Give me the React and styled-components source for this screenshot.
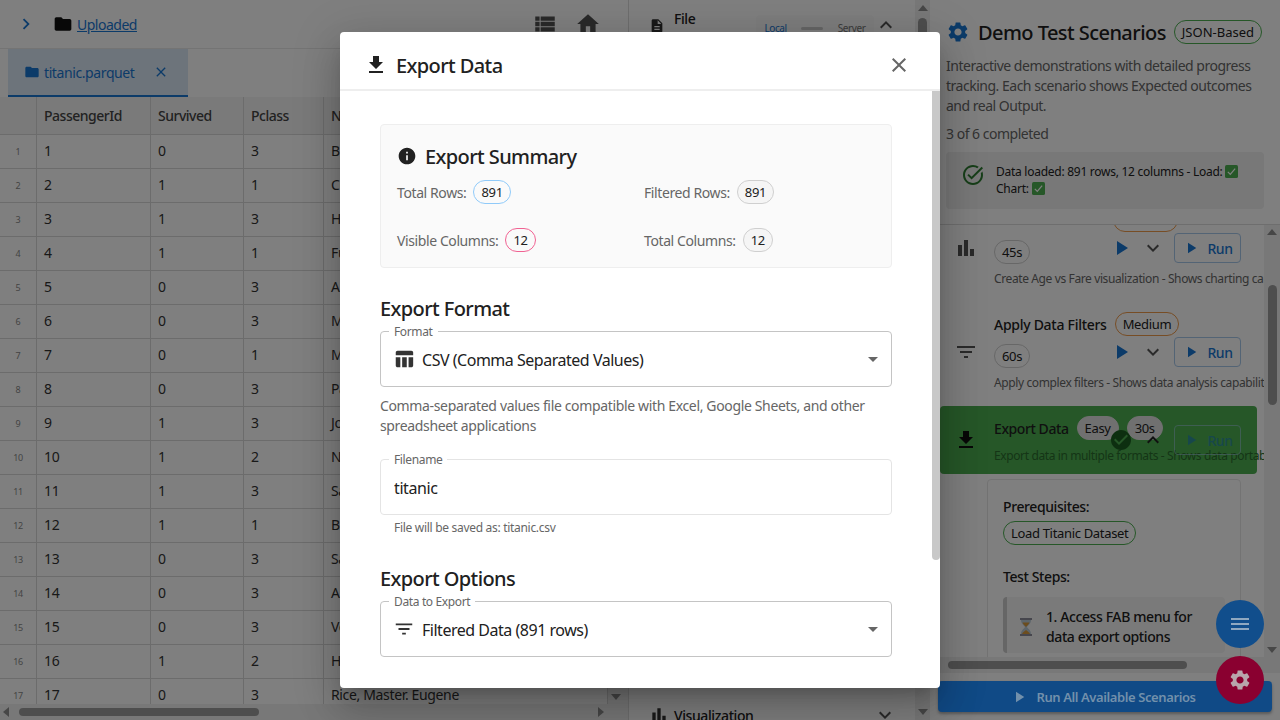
import React from "react"
import styled, { createGlobalStyle } from "styled-components"
import {
  MdBarChart, MdCheckCircle, MdChevronRight, MdClose, MdDescription, MdExpandLess, MdExpandMore,
  MdFileDownload, MdFilterList, MdFolder, MdHome, MdInfo, MdMenu, MdPlayArrow, MdSettings,
  MdTableChart, MdTaskAlt, MdViewList, MdArrowDropDown,
} from "react-icons/md"

const rows = [
  [1, 0, 3, "Braund, Mr. Owen Harris"],
  [2, 1, 1, "Cumings, Mrs. John Bradley"],
  [3, 1, 3, "Heikkinen, Miss. Laina"],
  [4, 1, 1, "Futrelle, Mrs. Jacques Heath"],
  [5, 0, 3, "Allen, Mr. William Henry"],
  [6, 0, 3, "Moran, Mr. James"],
  [7, 0, 1, "McCarthy, Mr. Timothy J"],
  [8, 0, 3, "Palsson, Master. Gosta Leonard"],
  [9, 1, 3, "Johnson, Mrs. Oscar W"],
  [10, 1, 2, "Nasser, Mrs. Nicholas"],
  [11, 1, 3, "Sandstrom, Miss. Marguerite Rut"],
  [12, 1, 1, "Bonnell, Miss. Elizabeth"],
  [13, 0, 3, "Saundercock, Mr. William Henry"],
  [14, 0, 3, "Andersson, Mr. Anders Johan"],
  [15, 0, 3, "Vestrom, Miss. Hulda Amanda"],
  [16, 1, 2, "Hewlett, Mrs. Mary D Kingcome"],
  [17, 0, 3, "Rice, Master. Eugene"],
]

const GlobalStyle = createGlobalStyle`
  body {
    margin: 0;
    overflow: hidden;
    font-family: "Noto Sans", "Open Sans", sans-serif;
    letter-spacing: -0.025em;
    color: #212121;
  }
  * { box-sizing: border-box; }
`

const Page = styled.div`
  position: relative;
  width: 1280px;
  height: 720px;
  display: flex;
  overflow: hidden;
  background: #fff;
`

/* left side: file tree + table */
const LeftPanel = styled.section`
  width: 629px;
  height: 720px;
  flex: none;
  display: flex;
  flex-direction: column;
  border-right: 1px solid #ddd;
`
const PathBar = styled.div`
  height: 49px;
  flex: none;
  display: flex;
  align-items: center;
  padding: 0 27px 0 15px;
  border-bottom: 1px solid #e8e8e8;
  color: #555;
  font-size: 14px;
`
const PathSpacer = styled.div`flex: 1;`
const ChevronBlue = styled(MdChevronRight)`
  color: #1976d2;
  margin-right: 16px;
`
const BlackFolder = styled(MdFolder)`
  color: #111;
  margin-right: 4px;
`
const PathLink = styled.a`
  color: #1976d2;
  text-decoration: underline;
  letter-spacing: -0.035em;
  margin-top: 1px;
`
const BarIcon = styled.span`
  display: flex;
  margin-left: ${p => p.$gap || 0}px;
  color: #555;
`
const TabStrip = styled.div`
  height: 48px;
  flex: none;
  padding-left: 8px;
  display: flex;
`
const Tab = styled.div`
  width: 180px;
  height: 48px;
  display: flex;
  align-items: center;
  padding-left: 16px;
  gap: 4px;
  background: #dbe9f6;
  border-bottom: 2px solid #1976d2;
  color: #1976d2;
  font-size: 14px;
`
const TabClose = styled(MdClose)`
  margin-left: 14px;
`
const TableFrame = styled.div`
  flex: 1;
  min-height: 0;
  display: flex;
`
const TableColumn = styled.div`
  width: 608px;
  flex: none;
  display: flex;
  flex-direction: column;
`
const TableArea = styled.div`
  flex: 1;
  min-height: 0;
  overflow: hidden;
`
const Row = styled.div`
  display: grid;
  grid-template-columns: 37px 114px 93px 80px 1fr;
  height: ${p => (p.$head ? 38 : 34)}px;
  background: ${p => (p.$head ? "#f5f5f5" : "#fff")};
  border-bottom: 1px solid #d8d8d8;
  font-size: 14px;
  font-weight: ${p => (p.$head ? 500 : 400)};
  letter-spacing: ${p => (p.$head ? "-0.035em" : "-0.025em")};
  color: ${p => (p.$head ? "#444" : "#333")};
`
const Cell = styled.div`
  display: flex;
  align-items: center;
  padding: 0 0 ${p => (p.$head ? 0 : 2)}px 7px;
  border-right: 1px solid #d8d8d8;
  white-space: nowrap;
  overflow: hidden;
`
const IndexCell = styled(Cell)`
  justify-content: center;
  padding: 0;
  font-size: 9px;
  color: #888;
`
const HScroll = styled.div`
  height: 16px;
  flex: none;
  display: flex;
  align-items: center;
  padding: 0 ${p => p.$right || 0}px 0 ${p => p.$left || 0}px;
  background: #f1f1f1;
`
const ScrollThumb = styled.div`
  width: ${p => p.$w}px;
  height: 8px;
  margin: 0 ${p => p.$after || 0}px 0 ${p => p.$before || 0}px;
  border-radius: 4px;
  background: #9c9c9c;
`
const TableVScroll = styled.div`
  flex: 1;
  display: flex;
  flex-direction: column;
  align-items: center;
  justify-content: flex-end;
  padding: 0 4px 20px 0;
  background: #f1f1f1;
`
const Arrow = styled.span`
  flex: none;
  width: 0;
  height: 0;
  border: 5px solid transparent;
  ${p => p.$dir === "left" && "border-right: 6px solid #8f8f8f; border-left: 0;"}
  ${p => p.$dir === "right" && "border-left: 6px solid #8f8f8f; border-right: 0;"}
  ${p => p.$dir === "up" && "border-bottom: 6px solid #8f8f8f; border-top: 0;"}
  ${p => p.$dir === "down" && "border-top: 6px solid #8f8f8f; border-bottom: 0;"}
`

/* middle column, mostly under the dialog */
const MiddlePanel = styled.section`
  width: 286px;
  height: 720px;
  flex: none;
  display: flex;
  flex-direction: column;
  justify-content: space-between;
  overflow: hidden;
`
const Accordion = styled.div`
  display: flex;
  align-items: ${p => (p.$top ? "flex-start" : "center")};
  height: ${p => (p.$top ? 60 : 36)}px;
  margin-bottom: ${p => (p.$top ? 0 : -12)}px;
  padding-left: 20px;
  padding-top: ${p => (p.$top ? 9 : 2)}px;
  font-size: 14px;
  font-weight: 500;
`
const AccordionIcon = styled.span`
  display: flex;
  width: 25px;
  margin-top: ${p => p.$top || 0}px;
  color: #333;
`
const ModeBox = styled.div`
  width: 118px;
  height: 34px;
  margin: 6px 0 0 61px;
  display: flex;
  align-items: flex-start;
  justify-content: space-between;
  padding: 6px 9px 0 8px;
  background: #fafafa;
  border-radius: 4px;
  font-size: 10px;
  line-height: 14px;
  font-weight: 400;
  color: #777;
`
const ModeLabel = styled.span`
  color: ${p => (p.$on ? "#1976d2" : "#777")};
`
const Switch = styled.span`
  width: 22px;
  height: 3px;
  margin-top: 6px;
  background: #ccc;
  border-radius: 2px;
`
const AccordionEnd = styled.span`
  display: flex;
  margin-left: ${p => p.$gap}px;
  margin-top: ${p => p.$top || 0}px;
  color: #555;
`
const MiddleScroll = styled.div`
  width: 15px;
  height: 720px;
  flex: none;
  display: flex;
  flex-direction: column;
  align-items: center;
  padding: 5px 0;
  background: #f1f1f1;
`
const MiddleThumb = styled.div`
  width: 9px;
  height: 300px;
  margin: 7px 0 auto;
  border-radius: 5px;
  background: #9c9c9c;
`
const Gutter = styled.div`
  width: 8px;
  flex: none;
`

/* right side: test scenarios */
const ScenarioPanel = styled.section`
  flex: 1;
  min-width: 0;
  display: flex;
  flex-direction: column;
  height: 720px;
`
const ScenarioHead = styled.div`
  height: 225px;
  flex: none;
  padding: 20px 16px 0 8px;
  border-bottom: 1px solid #ddd;
`
const TitleRow = styled.div`
  display: flex;
  align-items: center;
  height: 24px;
  gap: 8px;
  font-size: 20px;
  font-weight: 500;
  letter-spacing: -0.028em;
  white-space: nowrap;
`
const BlueGear = styled(MdSettings)`
  color: #1976d2;
  flex: none;
`
const Muted = styled.div`
  font-size: 14px;
  line-height: 20px;
  letter-spacing: -0.035em;
  color: #666;
  margin-top: ${p => p.$top}px;
`
const Notice = styled.div`
  display: flex;
  align-items: flex-start;
  margin-top: 8px;
  height: 57px;
  padding: 11px 16px 0 15px;
  background: #f0f0f0;
  border-radius: 4px;
  font-size: 12px;
  line-height: 17px;
  letter-spacing: -0.022em;
  gap: 11px;
`
const NoticeIcon = styled(MdTaskAlt)`
  color: #2e7d32;
  flex: none;
`
const Tick = styled.svg`
  width: 13px;
  height: 13px;
  vertical-align: -2px;
`
const ListFrame = styled.div`
  height: 432px;
  flex: none;
  display: flex;
`
const ScenarioList = styled.div`
  width: 326px;
  flex: none;
  overflow: hidden;
  padding-left: 2px;
`
const Scenario = styled.div`
  position: relative;
  width: 317px;
  height: ${p => (p.$done ? 68 : 104)}px;
  margin-top: ${p => p.$shift || 0}px;
  display: flex;
  align-items: center;
  padding-left: 14px;
  border-radius: 4px;
  background: ${p => (p.$done ? "#4caf50" : "transparent")};
`
const ScenarioIcon = styled.span`
  display: flex;
  width: 40px;
  flex: none;
  color: ${p => (p.$done ? "#111" : "#555")};
`
const ScenarioText = styled.div`
  align-self: flex-start;
  margin-top: ${p => (p.$done ? 10 : 12)}px;
  display: flex;
  flex-direction: column;
  min-width: 0;
  white-space: nowrap;
`
const ScenarioLine = styled.div`
  display: flex;
  align-items: center;
  height: 24px;
  gap: 8px;
  padding-left: ${p => p.$indent || 0}px;
  margin-bottom: ${p => p.$after || 0}px;
  font-size: 14px;
  font-weight: 500;
  letter-spacing: ${p => (p.$tight ? "-0.03em" : "-0.02em")};
`
const ScenarioDesc = styled.div`
  font-size: 12px;
  line-height: 20px;
  letter-spacing: -0.032em;
  color: ${p => (p.$done ? "#2a6b2d" : "#666")};
`
const Chip = styled.span`
  display: inline-flex;
  align-items: center;
  height: 24px;
  padding: 0 7px;
  border-radius: 12px;
  border: 1px solid ${p => p.$line || "#cfcfcf"};
  background: ${p => p.$fill || "transparent"};
  font-size: 13px;
  font-weight: 400;
  letter-spacing: ${p => (p.$wide ? "0" : "-0.025em")};
  color: #212121;
  white-space: nowrap;
  flex: none;
`
const Actions = styled.div`
  position: absolute;
  right: 16px;
  top: 50%;
  transform: translateY(-50%);
  display: flex;
  align-items: center;
`
const ActionIcon = styled.span`
  width: 32px;
  display: flex;
  justify-content: center;
  color: ${p => p.$c};
`
const RunButton = styled.span`
  width: 67px;
  height: 30px;
  margin-left: 5px;
  display: flex;
  align-items: center;
  justify-content: center;
  gap: 7px;
  border: 1px solid #a6c8ea;
  border-radius: 4px;
  color: #1976d2;
  font-size: 14px;
  font-weight: 500;
  opacity: ${p => (p.$off ? 0.55 : 1)};
`
const Details = styled.div`
  width: 254px;
  height: 300px;
  margin: 5px 0 0 47px;
  padding: 17px 0 0 15px;
  border: 1px solid #e6e6e6;
  border-radius: 4px;
`
const DetailsLabel = styled.div`
  font-size: 14px;
  font-weight: 500;
  line-height: 20px;
  margin: ${p => p.$top || 0}px 0 4px;
`
const Step = styled.div`
  width: 222px;
  height: 56px;
  margin-top: 10px;
  display: flex;
  align-items: center;
  border-left: 4px solid #ccc;
  background: #f5f5f5;
  border-radius: 4px;
  padding: 4px 0 0 12px;
  gap: 13px;
  font-size: 14px;
  font-weight: 500;
  line-height: 20px;
`
const StepText = styled.div`
  max-width: 165px;
`
const ListScroll = styled.div`
  width: 16px;
  flex: none;
  display: flex;
  flex-direction: column;
  align-items: center;
  padding: 4px 0;
  background: #f1f1f1;
`
const VThumb = styled.div`
  width: 9px;
  height: 120px;
  margin: 50px 0 auto;
  border-radius: 5px;
  background: #9c9c9c;
`
const RunAllWrap = styled.div`
  padding: 8px 8px 8px 0;
`
const RunAll = styled.div`
  position: relative;
  z-index: 3;
  height: 31px;
  display: flex;
  align-items: center;
  justify-content: center;
  gap: 8px;
  padding-right: 4px;
  background: #104a86;
  border-radius: 4px;
  color: #7290ab;
  font-size: 13px;
  font-weight: 600;
  box-shadow: 0 2px 3px rgba(0, 0, 0, .3);
`

/* overlay layers */
const Backdrop = styled.div`
  position: absolute;
  inset: 0;
  z-index: 2;
  background: rgba(0, 0, 0, 0.5);
`
const Fab = styled.div`
  position: absolute;
  z-index: 4;
  left: 1216px;
  top: ${p => p.$top}px;
  width: 48px;
  height: 48px;
  border-radius: 50%;
  display: flex;
  align-items: center;
  justify-content: center;
  background: ${p => p.$bg};
  color: ${p => p.$fg};
`
const Dialog = styled.div`
  position: absolute;
  z-index: 5;
  left: 340px;
  top: 32px;
  width: 600px;
  height: 656px;
  display: flex;
  flex-direction: column;
  background: #fff;
  border-radius: 4px;
  overflow: hidden;
  box-shadow: 0 11px 15px -7px rgba(0,0,0,.2), 0 24px 38px 3px rgba(0,0,0,.14), 0 9px 46px 8px rgba(0,0,0,.12);
`
const DialogHead = styled.header`
  height: 59px;
  flex: none;
  display: flex;
  align-items: center;
  gap: 8px;
  padding: 9px 29px 0 24px;
  border-bottom: 2px solid #eee;
  font-size: 20px;
  font-weight: 500;
  letter-spacing: -0.03em;
`
const CloseBtn = styled(MdClose)`
  margin-left: auto;
  color: #666;
`
const DialogBody = styled.div`
  flex: 1;
  min-height: 0;
  padding: 33px 48px 0 40px;
`
const BodyThumb = styled.div`
  position: absolute;
  right: 0;
  top: 59px;
  width: 8px;
  height: 469px;
  background: #c8c8c8;
  border-radius: 0 0 4px 4px;
`
const Summary = styled.div`
  height: 144px;
  padding: 17px 16px 0 16px;
  background: #fafafa;
  border: 1px solid #eee;
  border-radius: 4px;
`
const SummaryTitle = styled.div`
  display: flex;
  align-items: center;
  height: 28px;
  gap: 8px;
  font-size: 20px;
  font-weight: 500;
  letter-spacing: -0.03em;
`
const SummaryGrid = styled.div`
  display: grid;
  grid-template-columns: 247px 1fr;
  grid-auto-rows: 48px;
  margin-top: 10px;
`
const Stat = styled.div`
  display: flex;
  align-items: center;
  gap: 7px;
  height: 24px;
  font-size: 14px;
  color: #666;
`
const SectionTitle = styled.h3`
  margin: ${p => p.$top}px 0 8px;
  font-size: 20px;
  line-height: 28px;
  font-weight: 500;
  letter-spacing: -0.03em;
`
const Field = styled.div`
  position: relative;
  height: 56px;
  margin-top: ${p => p.$top || 0}px;
  display: flex;
  align-items: center;
  padding: 0 6px 0 14px;
  border: 1px solid ${p => p.$line || "#c4c4c4"};
  border-radius: 4px;
  font-size: 16px;
`
const FieldLabel = styled.label`
  position: absolute;
  left: 8px;
  top: -8px;
  padding: 0 5px;
  background: #fff;
  font-size: 12px;
  line-height: 16px;
  letter-spacing: -0.03em;
  color: #666;
`
const FieldIcon = styled.span`
  display: flex;
  width: 29px;
  margin-left: -2px;
  color: #333;
`
const FieldText = styled.span`
  margin-top: 2px;
  letter-spacing: -0.03em;
`
const FieldCaret = styled(MdArrowDropDown)`
  margin-left: auto;
  color: #666;
`
const PlainInput = styled.input`
  border: 0;
  outline: 0;
  padding: 0;
  margin: 2px 0 0 -1px;
  width: 100%;
  font: inherit;
  letter-spacing: inherit;
  color: #212121;
`
const Helper = styled.div`
  margin: ${p => p.$top}px 0 0 ${p => p.$left || 0}px;
  font-size: ${p => p.$size}px;
  line-height: 20px;
  letter-spacing: -0.025em;
  color: #666;
`

function Check() {
  return (
    <Tick viewBox="0 0 16 16">
      <rect width="16" height="16" rx="2" fill="#4caf50" />
      <path d="M3.5 8.5l3 3 6-7" fill="none" stroke="#fff" strokeWidth="1.6" />
    </Tick>
  )
}

function Hourglass() {
  return (
    <svg width="14" height="18" viewBox="0 0 14 18">
      <rect x="1" y="0" width="12" height="2" fill="#8d8d9a" />
      <rect x="1" y="16" width="12" height="2" fill="#8d8d9a" />
      <path d="M2 2h10c0 4-3 5-4 7 1 2 4 3 4 7H2c0-4 3-5 4-7-1-2-4-3-4-7z" fill="#b9cad6" />
      <path d="M3.5 4.5h7C10 6.5 8 7.5 7 9 6 7.5 4 6.5 3.5 4.5zM3 16c.5-2 3-3 4-4 1 1 3.5 2 4 4z" fill="#d99a3c" />
    </svg>
  )
}

function ScenarioRow({ icon, title, level, line, time, desc, shift, done, indent }) {
  return (
    <Scenario $shift={shift} $done={done}>
      <ScenarioIcon $done={done}>{icon}</ScenarioIcon>
      <ScenarioText $done={done}>
        {done ? (
          <ScenarioLine $after={6} $tight>
            {title}
            <Chip $fill="#e0e0e0" $line="#e0e0e0">{level}</Chip>
            <Chip $fill="#e0e0e0" $line="#e0e0e0">{time}</Chip>
          </ScenarioLine>
        ) : (
          <>
            <ScenarioLine $after={8} $indent={indent}>
              {title}
              <Chip $line={line}>{level}</Chip>
            </ScenarioLine>
            <ScenarioLine $after={5}><Chip>{time}</Chip></ScenarioLine>
          </>
        )}
        <ScenarioDesc $done={done}>{desc}</ScenarioDesc>
      </ScenarioText>
      <Actions>
        {done ? (
          <ActionIcon $c="#1b5e20"><MdCheckCircle size={24} /></ActionIcon>
        ) : (
          <ActionIcon $c="#1976d2"><MdPlayArrow size={24} /></ActionIcon>
        )}
        <ActionIcon $c={done ? "#222" : "#555"}>{done ? <MdExpandLess size={24} /> : <MdExpandMore size={24} />}</ActionIcon>
        <RunButton $off={done}><MdPlayArrow size={18} />Run</RunButton>
      </Actions>
    </Scenario>
  )
}

export default function App() {
  return (
    <Page>
      <GlobalStyle />

      <LeftPanel>
        <PathBar>
          <ChevronBlue size={22} />
          <BlackFolder size={20} />
          <PathLink>Uploaded</PathLink>
          <PathSpacer />
          <BarIcon><MdViewList size={26} /></BarIcon>
          <BarIcon $gap={17}><MdHome size={26} /></BarIcon>
        </PathBar>
        <TabStrip>
          <Tab>
            <MdFolder size={16} />
            titanic.parquet
            <TabClose size={16} />
          </Tab>
        </TabStrip>
        <TableFrame>
          <TableColumn>
            <TableArea>
              <Row $head>
                <Cell $head />
                <Cell $head>PassengerId</Cell>
                <Cell $head>Survived</Cell>
                <Cell $head>Pclass</Cell>
                <Cell $head>Name</Cell>
              </Row>
              {rows.map(r => (
                <Row key={r[0]}>
                  <IndexCell>{r[0]}</IndexCell>
                  <Cell>{r[0]}</Cell>
                  <Cell>{r[1]}</Cell>
                  <Cell>{r[2]}</Cell>
                  <Cell>{r[3]}</Cell>
                </Row>
              ))}
            </TableArea>
            <HScroll $left={3} $right={4}>
              <Arrow $dir="left" />
              <ScrollThumb $w={240} $before={10} />
              <PathSpacer />
              <Arrow $dir="right" />
            </HScroll>
          </TableColumn>
          <TableVScroll>
            <Arrow $dir="down" />
          </TableVScroll>
        </TableFrame>
      </LeftPanel>

      <MiddlePanel>
        <Accordion $top>
          <AccordionIcon $top={9}><MdDescription size={16} /></AccordionIcon>
          File
          <ModeBox>
            <ModeLabel $on>Local</ModeLabel>
            <Switch />
            <ModeLabel>Server</ModeLabel>
          </ModeBox>
          <AccordionEnd $gap={0} $top={4}><MdExpandLess size={24} /></AccordionEnd>
        </Accordion>
        <Accordion>
          <AccordionIcon><MdBarChart size={20} /></AccordionIcon>
          Visualization
          <AccordionEnd $gap={119}><MdExpandMore size={24} /></AccordionEnd>
        </Accordion>
      </MiddlePanel>
      <MiddleScroll>
        <Arrow $dir="up" />
        <MiddleThumb />
        <Arrow $dir="down" />
      </MiddleScroll>
      <Gutter />

      <ScenarioPanel>
        <ScenarioHead>
          <TitleRow>
            <BlueGear size={24} />
            Demo Test Scenarios
            <Chip $line="#4caf50" $wide>JSON-Based</Chip>
          </TitleRow>
          <Muted $top={12}>
            Interactive demonstrations with detailed progress tracking. Each scenario shows Expected outcomes and real Output.
          </Muted>
          <Muted $top={8}>3 of 6 completed</Muted>
          <Notice>
            <NoticeIcon size={24} />
            <div>Data loaded: 891 rows, 12 columns - Load: <Check /> Chart: <Check /></div>
          </Notice>
        </ScenarioHead>

        <ListFrame>
          <ScenarioList>
            <ScenarioRow
              shift={-29}
              indent={119}
              icon={<MdBarChart size={24} />}
              level="Medium"
              line="#ef9a4a"
              time="45s"
              desc="Create Age vs Fare visualization - Shows charting capabilities in action"
            />
            <ScenarioRow
              icon={<MdFilterList size={24} />}
              title="Apply Data Filters"
              level="Medium"
              line="#ef9a4a"
              time="60s"
              desc="Apply complex filters - Shows data analysis capabilities in action"
            />
            <ScenarioRow
              done
              shift={2}
              icon={<MdFileDownload size={24} />}
              title="Export Data"
              level="Easy"
              time="30s"
              desc="Export data in multiple formats - Shows data portability in action"
            />
            <Details>
              <DetailsLabel>Prerequisites:</DetailsLabel>
              <Chip $line="#4caf50">Load Titanic Dataset</Chip>
              <DetailsLabel $top={22}>Test Steps:</DetailsLabel>
              <Step>
                <Hourglass />
                <StepText>1. Access FAB menu for data export options</StepText>
              </Step>
            </Details>
          </ScenarioList>
          <ListScroll>
            <Arrow $dir="up" />
            <VThumb />
            <Arrow $dir="down" />
          </ListScroll>
        </ListFrame>

        <HScroll $left={10}>
          <ScrollThumb $w={239} />
        </HScroll>
        <RunAllWrap>
          <RunAll><MdPlayArrow size={18} />Run All Available Scenarios</RunAll>
        </RunAllWrap>
      </ScenarioPanel>

      <Backdrop />
      <Fab $top={600} $bg="#114e8c" $fg="#8fa8c0"><MdMenu size={24} /></Fab>
      <Fab $top={656} $bg="#8a0030" $fg="#b8a5ac"><MdSettings size={24} /></Fab>

      <Dialog>
        <DialogHead>
          <MdFileDownload size={24} />
          Export Data
          <CloseBtn size={24} />
        </DialogHead>
        <BodyThumb />
        <DialogBody>
          <Summary>
            <SummaryTitle>
              <MdInfo size={20} />
              Export Summary
            </SummaryTitle>
            <SummaryGrid>
              <Stat>Total Rows: <Chip $line="#90caf9">891</Chip></Stat>
              <Stat>Filtered Rows: <Chip $fill="#f5f5f5">891</Chip></Stat>
              <Stat>Visible Columns: <Chip $line="#f06292">12</Chip></Stat>
              <Stat>Total Columns: <Chip $fill="#f5f5f5">12</Chip></Stat>
            </SummaryGrid>
          </Summary>

          <SectionTitle $top={27}>Export Format</SectionTitle>
          <Field>
            <FieldLabel>Format</FieldLabel>
            <FieldIcon><MdTableChart size={22} /></FieldIcon>
            <FieldText>CSV (Comma Separated Values)</FieldText>
            <FieldCaret size={24} />
          </Field>
          <Helper $top={9} $size={14}>
            Comma-separated values file compatible with Excel, Google Sheets, and other spreadsheet applications
          </Helper>

          <Field $line="#e4e4e4" $top={23}>
            <FieldLabel>Filename</FieldLabel>
            <PlainInput readOnly value="titanic" />
          </Field>
          <Helper $top={3} $left={14} $size={12}>File will be saved as: titanic.csv</Helper>

          <SectionTitle $top={27}>Export Options</SectionTitle>
          <Field>
            <FieldLabel>Data to Export</FieldLabel>
            <FieldIcon><MdFilterList size={22} /></FieldIcon>
            <FieldText>Filtered Data (891 rows)</FieldText>
            <FieldCaret size={24} />
          </Field>
        </DialogBody>
      </Dialog>
    </Page>
  )
}
